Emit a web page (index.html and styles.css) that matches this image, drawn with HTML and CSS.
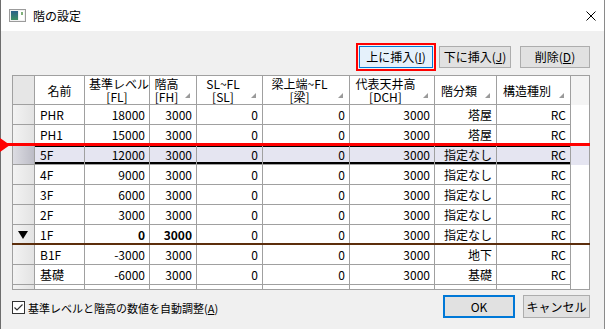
FILE: index.html
```html
<!DOCTYPE html>
<html lang="ja">
<head>
<meta charset="utf-8">
<title>階の設定</title>
<link rel="stylesheet" href="styles.css">
</head>
<body>
<div class="window">
  <div class="titlebar">
    <svg class="appicon" viewBox="0 0 17 13" width="17" height="13">
      <defs>
        <linearGradient id="pane" x1="0" y1="0" x2="0" y2="1">
          <stop offset="0" stop-color="#2a5f8a"/>
          <stop offset="1" stop-color="#3f8f63"/>
        </linearGradient>
      </defs>
      <rect x="0.5" y="0.5" width="16" height="12" fill="#f2f2f2" stroke="#9b9b9b"/>
      <rect x="2" y="2" width="7" height="9" fill="url(#pane)"/>
      <rect x="10" y="2" width="5" height="9" fill="#ffffff"/>
      <rect x="12" y="3" width="2" height="3" fill="#7fb07a"/>
    </svg>
    <span class="title">階の設定</span>
    <svg class="close" viewBox="0 0 10 10" width="10" height="10">
      <path d="M0.5 0.5 L9.5 9.5 M9.5 0.5 L0.5 9.5" stroke="#000" stroke-width="1" fill="none"/>
    </svg>
  </div>

  <div class="content">
    <div class="toolbar">
      <span class="mark"><button class="btn btn-focus btn-insert-up">上に挿入(<u>I</u>)</button></span>
      <button class="btn btn-insert-down">下に挿入(<u>J</u>)</button>
      <button class="btn btn-delete">削除(<u>D</u>)</button>
    </div>

    <div class="grid">
      <table>
        <thead>
          <tr>
            <th class="rh corner"></th>
            <th class="c-name">名前</th>
            <th class="c-fl">基準レベル<br>[FL]</th>
            <th class="c-fh sort">階高<br>[FH]<span class="glyph"></span></th>
            <th class="c-sl sort">SL~FL<br>[SL]<span class="glyph"></span></th>
            <th class="c-beam sort">梁上端~FL<br>[梁]<span class="glyph"></span></th>
            <th class="c-dch sort">代表天井高<br>[DCH]<span class="glyph"></span></th>
            <th class="c-cls sort">階分類<span class="glyph"></span></th>
            <th class="c-str sort">構造種別<span class="glyph"></span></th>
            <th class="fill"></th>
          </tr>
        </thead>
        <tbody>
          <tr>
            <td class="rh"></td><td class="l">PHR</td><td>18000</td><td>3000</td><td>0</td><td>0</td><td>3000</td><td>塔屋</td><td>RC</td><td class="fill"></td>
          </tr>
          <tr>
            <td class="rh"></td><td class="l">PH1</td><td>15000</td><td>3000</td><td>0</td><td>0</td><td>3000</td><td>塔屋</td><td>RC</td><td class="fill"></td>
          </tr>
          <tr class="sel">
            <td class="rh"></td><td class="l first">5F</td><td>12000</td><td>3000</td><td>0</td><td>0</td><td>3000</td><td>指定なし</td><td class="last">RC</td><td class="fill"></td>
          </tr>
          <tr>
            <td class="rh"></td><td class="l">4F</td><td>9000</td><td>3000</td><td>0</td><td>0</td><td>3000</td><td>指定なし</td><td>RC</td><td class="fill"></td>
          </tr>
          <tr>
            <td class="rh"></td><td class="l">3F</td><td>6000</td><td>3000</td><td>0</td><td>0</td><td>3000</td><td>指定なし</td><td>RC</td><td class="fill"></td>
          </tr>
          <tr>
            <td class="rh"></td><td class="l">2F</td><td>3000</td><td>3000</td><td>0</td><td>0</td><td>3000</td><td>指定なし</td><td>RC</td><td class="fill"></td>
          </tr>
          <tr>
            <td class="rh"><span class="cur"></span></td><td class="l">1F</td><td class="b">0</td><td class="b">3000</td><td>0</td><td>0</td><td>3000</td><td>指定なし</td><td>RC</td><td class="fill"></td>
          </tr>
          <tr>
            <td class="rh"></td><td class="l">B1F</td><td>-3000</td><td>3000</td><td>0</td><td>0</td><td>3000</td><td>地下</td><td>RC</td><td class="fill"></td>
          </tr>
          <tr>
            <td class="rh"></td><td class="l">基礎</td><td>-6000</td><td>3000</td><td>0</td><td>0</td><td>3000</td><td>基礎</td><td>RC</td><td class="fill"></td>
          </tr>
          <tr>
            <td class="rh"></td><td class="l"></td><td></td><td></td><td></td><td></td><td></td><td></td><td></td><td class="fill"></td>
          </tr>
        </tbody>
      </table>
    </div>

    <div class="footer">
      <label class="check">
        <svg class="box" viewBox="0 0 13 13" width="13" height="13">
          <rect x="0.5" y="0.5" width="12" height="12" fill="#fff" stroke="#333"/>
          <path d="M2.5 6.5 L5 9 L10.5 3.5" stroke="#333" stroke-width="1.2" fill="none"/>
        </svg>
        <span>基準レベルと階高の数値を自動調整(<u>A</u>)</span>
      </label>
      <div class="actions">
        <button class="btn btn-default btn-ok">OK</button>
        <button class="btn btn-cancel">キャンセル</button>
      </div>
    </div>
  </div>

  <div class="redline"></div>
  <div class="redarrow"></div>
  <div class="brownline"></div>
</div>
</body>
</html>
```

FILE: styles.css
```css
* { box-sizing: border-box; }
html, body { margin: 0; padding: 0; }
body {
  width: 607px;
  height: 329px;
  overflow: hidden;
  background: #ffffff;
  font-family: "Noto Sans CJK JP", "Noto Sans", sans-serif;
  font-size: 12px;
  color: #000;
}

.window {
  position: relative;
  width: 605px;
  height: 329px;
  background: #f0f0f0;
  border-left: 1px solid #6d6d6d;
  border-right: 1px solid #8a8a8a;
}

.titlebar {
  height: 31px;
  background: #ffffff;
  display: flex;
  align-items: center;
  padding-left: 8px;
}
.appicon { margin-right: 7px; flex: none; }
.title { flex: 1; font-size: 12px; line-height: 14px; }
.close { margin-right: 8px; flex: none; }

.content {
  padding: 0 14px 0 11px;
}

.toolbar {
  display: flex;
  justify-content: flex-end;
  margin-top: 15px;
  height: 22px;
}

.btn {
  font-family: "Noto Sans CJK JP", "Noto Sans", sans-serif;
  font-size: 12px;
  line-height: 14px;
  color: #000;
  background: #e1e1e1;
  border: 1px solid #adadad;
  padding: 0;
  height: 22px;
  margin: 0;
}
.btn u { text-decoration: underline; }
.mark {
  display: block;
  outline: 2px solid #ff0000;
  outline-offset: 1px;
  height: 22px;
}
.btn-focus {
  background: #e5f1fb;
  border-color: #0078d7;
}
.btn-insert-up { width: 74px; }
.btn-insert-down { width: 72px; margin-left: 6px; }
.btn-delete { width: 70px; margin-left: 9px; }

/* grid */
.grid {
  margin-top: 7px;
  width: 578px;
  height: 215px;
  border: 1px solid #a0a0a0;
  background: #ffffff;
  overflow: hidden;
}
.grid table {
  border-collapse: separate;
  border-spacing: 0;
  table-layout: fixed;
  width: 576px;
}
.grid th, .grid td {
  box-sizing: border-box;
  border-right: 1px solid #a0a0a0;
  border-bottom: 1px solid #a0a0a0;
  padding: 0 4px 0 4px;
  white-space: nowrap;
  overflow: hidden;
}
.grid th {
  position: relative;
  height: 29px;
  font-weight: normal;
  font-size: 12px;
  line-height: 13px;
  text-align: center;
  background: #ffffff;
}
.grid td {
  height: 20px;
  font-size: 12px;
  line-height: 19px;
  text-align: right;
  background: #ffffff;
}
.grid td.l { text-align: left; padding-left: 5px; }
.grid td.b { font-weight: bold; }

.grid .rh {
  width: 22px;
  background: linear-gradient(to right, #f3f3f3, #e3e3e3);
  padding: 0;
  position: relative;
}
.grid th.corner { background: #e6e6e6; }
.c-name { width: 50px; }
.c-fl { width: 65px; }
.c-fh { width: 47px; }
.c-sl { width: 66px; }
.c-beam { width: 87px; }
.c-dch { width: 85px; }
.c-cls { width: 62px; }
.c-str { width: 74px; }
.grid .fill {
  width: 18px;
  border: none;
  padding: 0;
}
.grid th.fill { background: #f4f4f4; }
.grid td.fill { background: #ffffff; }

.grid th.sort { padding-right: 15px; padding-left: 2px; }
.glyph {
  position: absolute;
  right: 6px;
  top: 17px;
  width: 0;
  height: 0;
  border-left: 5px solid transparent;
  border-bottom: 5px solid #9a9a9a;
}

/* selected row */
.grid tr.sel td { background: #e5e5f1; }
.grid tr.sel td.rh { background: linear-gradient(to right, #dcdce2, #bcbcc6); }
.grid tr.sel td:not(.rh):not(.fill) {
  box-shadow: inset 0 -2px 0 #000, inset 0 2px 0 #000;
}
.grid tr.sel td.first {
  box-shadow: inset 2px 0 0 #000, inset 0 -2px 0 #000, inset 0 2px 0 #000;
}
.grid tr.sel td.last {
  box-shadow: inset -2px 0 0 #000, inset 0 -2px 0 #000, inset 0 2px 0 #000;
}

.cur {
  position: absolute;
  left: 5px;
  top: 6px;
  width: 0;
  height: 0;
  border-left: 5px solid transparent;
  border-right: 5px solid transparent;
  border-top: 8px solid #000;
}

/* footer */
.footer {
  display: flex;
  align-items: center;
  justify-content: space-between;
  margin-top: 5px;
  height: 23px;
}
.check {
  display: flex;
  align-items: center;
  gap: 3px;
  font-size: 11px;
  line-height: 14px;
  margin-top: 2px;
}
.check .box { flex: none; }
.actions { display: flex; gap: 8px; }
.btn-ok {
  width: 72px;
  height: 23px;
  border: 2px solid #0078d7;
}
.btn-cancel {
  width: 67px;
  height: 23px;
}

/* annotation overlays */
.redline {
  position: absolute;
  left: -1px;
  top: 143px;
  width: 590px;
  height: 3px;
  background: #ff0000;
}
.redarrow {
  position: absolute;
  left: -1px;
  top: 138px;
  width: 0;
  height: 0;
  border-top: 7px solid transparent;
  border-bottom: 7px solid transparent;
  border-left: 10px solid #ff0000;
}
.brownline {
  position: absolute;
  left: 11px;
  top: 243px;
  width: 578px;
  height: 2px;
  background: #5c2e0c;
}
```
